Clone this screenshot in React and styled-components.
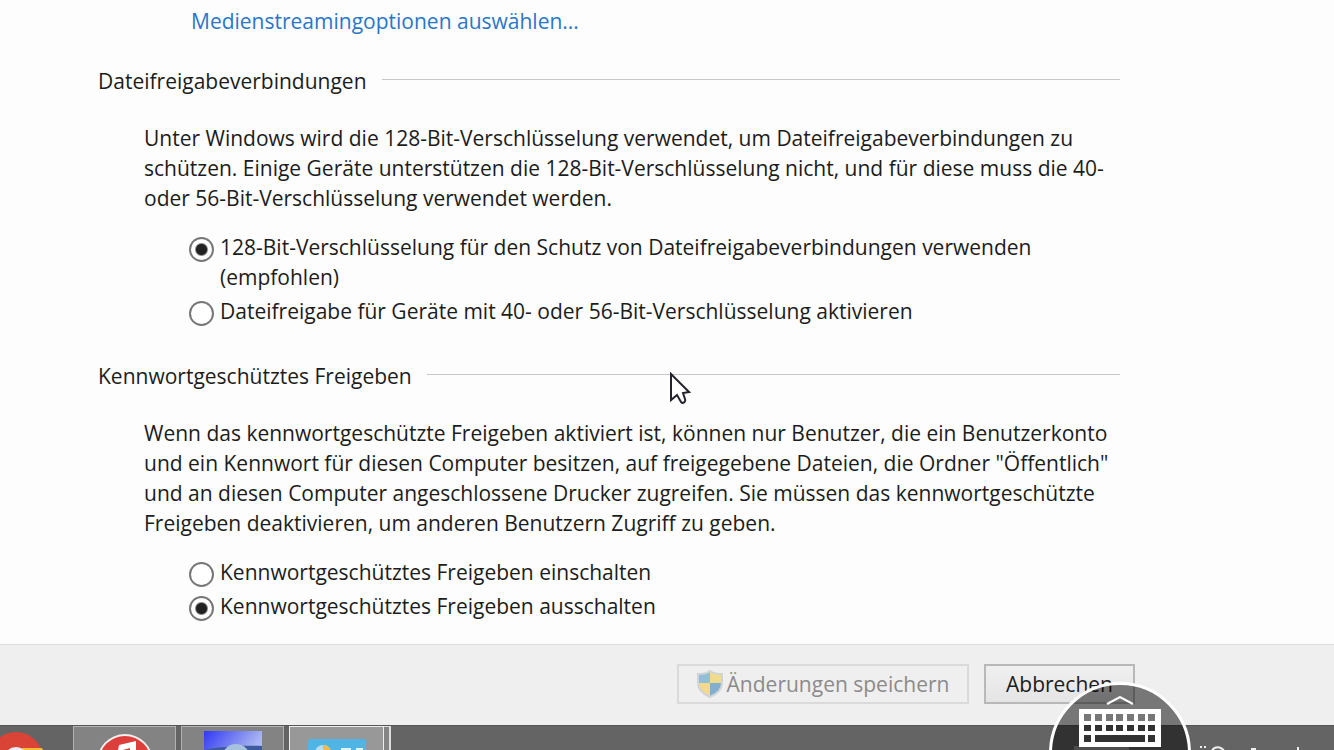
import React, { useState } from "react";
import styled, { createGlobalStyle } from "styled-components";

const sections = [
  {
    id: "encryption",
    title: "Dateifreigabeverbindungen",
    text: [
      "Unter Windows wird die 128-Bit-Verschlüsselung verwendet, um Dateifreigabeverbindungen zu",
      "schützen. Einige Geräte unterstützen die 128-Bit-Verschlüsselung nicht, und für diese muss die 40-",
      "oder 56-Bit-Verschlüsselung verwendet werden.",
    ],
    options: [
      [
        "128-Bit-Verschlüsselung für den Schutz von Dateifreigabeverbindungen verwenden",
        "(empfohlen)",
      ],
      ["Dateifreigabe für Geräte mit 40- oder 56-Bit-Verschlüsselung aktivieren"],
    ],
    selected: 0,
  },
  {
    id: "password",
    title: "Kennwortgeschütztes Freigeben",
    text: [
      "Wenn das kennwortgeschützte Freigeben aktiviert ist, können nur Benutzer, die ein Benutzerkonto",
      "und ein Kennwort für diesen Computer besitzen, auf freigegebene Dateien, die Ordner \"Öffentlich\"",
      "und an diesen Computer angeschlossene Drucker zugreifen. Sie müssen das kennwortgeschützte",
      "Freigeben deaktivieren, um anderen Benutzern Zugriff zu geben.",
    ],
    options: [
      ["Kennwortgeschütztes Freigeben einschalten"],
      ["Kennwortgeschütztes Freigeben ausschalten"],
    ],
    selected: 1,
  },
];

const Lines = ({ lines }) =>
  lines.map((line, index) => (
    <React.Fragment key={index}>
      {index > 0 && <br />}
      {line}
    </React.Fragment>
  ));

const Section = ({ section }) => {
  const [selected, setSelected] = useState(section.selected);

  return (
    <section>
      <Styled_Heading>{section.title}</Styled_Heading>
      <Styled_Text>
        <Lines lines={section.text} />
      </Styled_Text>
      <Styled_Options role="radiogroup" aria-label={section.title}>
        {section.options.map((option, index) => (
          <Styled_Option key={index} htmlFor={`${section.id}-${index}`}>
            <Styled_Radio
              type="radio"
              id={`${section.id}-${index}`}
              name={section.id}
              checked={selected === index}
              onChange={() => setSelected(index)}
            />
            <span>
              <Lines lines={option} />
            </span>
          </Styled_Option>
        ))}
      </Styled_Options>
    </section>
  );
};

const ShieldIcon = () => (
  <svg width="26" height="28" viewBox="0 0 26 28" aria-hidden="true">
    <g opacity="0.6">
      <path d="M13 1C9 4 5 4 1 4v9h12z" fill="#5b9ccc" />
      <path d="M13 1c4 3 8 3 12 3v9H13z" fill="#f2cd4c" />
      <path d="M1 13c0 7 5 11 12 14V13z" fill="#f2cd4c" />
      <path d="M25 13c0 7-5 11-12 14V13z" fill="#3d84bc" />
      <path
        d="M13 1c4 3 8 3 12 3v9c0 7-5 11-12 14C6 24 1 20 1 13V4c4 0 8 0 12-3z"
        fill="none"
        stroke="#b9c3c9"
        strokeWidth="2"
      />
    </g>
  </svg>
);

const BrowserIcon = () => (
  <svg width="64" height="26" viewBox="0 0 64 26" aria-hidden="true">
    <circle cx="16" cy="33" r="27" fill="#d94436" />
    <path d="M22 22h20c2 4 2 8 2 12H22z" fill="#f5bd35" />
    <circle cx="16" cy="33" r="12" fill="#e9edf5" />
  </svg>
);

const MusicIcon = () => (
  <svg width="56" height="26" viewBox="0 0 56 26" aria-hidden="true">
    <circle cx="28" cy="35" r="28" fill="#f7eeee" />
    <circle cx="28" cy="35" r="26" fill="#dc3f3b" />
    <path d="M22 18l17-4v14h-6v-7l-7 2v5h-6z" fill="#fff" />
  </svg>
);

const DesktopIcon = () => (
  <svg width="58" height="26" viewBox="0 0 58 26" aria-hidden="true">
    <defs>
      <linearGradient id="desktop-sky" x2="1" y2="0.3">
        <stop offset="0" stopColor="#3038f4" />
        <stop offset="1" stopColor="#aab7ef" />
      </linearGradient>
    </defs>
    <path d="M0 4h58v22H0z" fill="url(#desktop-sky)" />
    <path d="M0 26v-3c12-3 38-5 58-4v7z" fill="#3e5b9d" />
    <circle cx="32" cy="31" r="14" fill="#a7c2df" />
  </svg>
);

const ControlPanelIcon = () => (
  <svg width="60" height="26" viewBox="0 0 60 26" aria-hidden="true">
    <rect x="1" y="12" width="58" height="22" rx="2" fill="#50b4e5" />
    <circle cx="16" cy="26" r="8" fill="#b9dcef" />
    <path d="M16 26v-8a8 8 0 0 1 8 8z" fill="#f3b94c" />
    <path d="M34 22h10M49 22h7" stroke="#e0f4fc" strokeWidth="2" />
  </svg>
);

const KeyboardIcon = () => (
  <svg width="82" height="54" viewBox="0 0 82 54" aria-hidden="true">
    <path d="M28 8L41 1l13 7" fill="none" stroke="#fff" strokeWidth="2" />
    <path
      fill="#fff"
      fillRule="evenodd"
      d="M0 13h82v38H0z M5 18v7h7v-7z M16 18v7h7v-7z M27 18v7h7v-7z M37 18v7h7v-7z M48 18v7h7v-7z M59 18v7h7v-7z M69 18v7h7v-7z M5 29v6h7v-6z M16 29v6h7v-6z M27 29v6h7v-6z M37 29v6h7v-6z M48 29v6h7v-6z M59 29v6h7v-6z M69 29v6h7v-6z M5 39v7h7v-7z M16 39v7h50v-7z M69 39v7h7v-7z"
    />
  </svg>
);

const TrayIcons = () => (
  <svg width="236" height="7" viewBox="0 0 236 7" aria-hidden="true">
    <path d="M0 3h55v4H0z" fill="#9a9a9a" />
    <g fill="none" stroke="#eee" strokeWidth="2">
      <path d="M127 3v2M131 3v2M138 8c2-5 9-5 12 0M177 6h5M224 4v3" />
    </g>
  </svg>
);

const Cursor = () => (
  <Styled_Cursor width="22" height="34" viewBox="0 0 22 34" aria-hidden="true">
    <path
      d="M2 2v26l6-5 4 7c2 2 5 0 4-3l-2-6 6-1z"
      fill="#fff"
      stroke="#25232d"
      strokeWidth="2"
    />
  </Styled_Cursor>
);

const App = () => (
  <Styled_Window>
    <GlobalStyle />
    <Styled_Content>
      <Styled_Link href="#streaming">Medienstreamingoptionen auswählen...</Styled_Link>
      <Styled_Sections>
        {sections.map((section) => (
          <Section key={section.id} section={section} />
        ))}
      </Styled_Sections>
    </Styled_Content>
    <Styled_Footer>
      <Styled_Button disabled $width={292}>
        <ShieldIcon />
        Änderungen speichern
      </Styled_Button>
      <Styled_Button $width={151}>Abbrechen</Styled_Button>
    </Styled_Footer>
    <Styled_Taskbar>
      <Styled_PinnedTask aria-label="Browser">
        <BrowserIcon />
      </Styled_PinnedTask>
      <Styled_Task aria-label="Musik">
        <MusicIcon />
      </Styled_Task>
      <Styled_Task aria-label="Desktop">
        <DesktopIcon />
      </Styled_Task>
      <Styled_TaskGroup>
        <Styled_Task aria-label="Systemsteuerung" $active>
          <ControlPanelIcon />
        </Styled_Task>
        <Styled_TaskStack />
      </Styled_TaskGroup>
      <Styled_Tray>
        <TrayIcons />
      </Styled_Tray>
    </Styled_Taskbar>
    <Styled_KeyboardButton aria-label="Tastatur">
      <KeyboardIcon />
    </Styled_KeyboardButton>
    <Cursor />
  </Styled_Window>
);

const GlobalStyle = createGlobalStyle`
  * {
    box-sizing: border-box;
  }

  body {
    margin: 0;
    background: #fdfdfd;
    color: #1c1c1c;
    font-family: "Open Sans", "Noto Sans", sans-serif;
    font-size: 21px;
    line-height: 30px;
  }
`;

const Styled_Window = styled.div`
  position: relative;
  height: 100vh;
  overflow: hidden;
  display: flex;
  flex-direction: column;
`;

const Styled_Content = styled.main`
  flex: 1;
  padding: 6px 214px 0 98px;
  white-space: nowrap;
`;

const Styled_Link = styled.a`
  display: inline-block;
  margin-left: 93px;
  color: #2a76c8;
  text-decoration: none;
`;

const Styled_Sections = styled.div`
  display: flex;
  flex-direction: column;
  gap: 35px;
  margin-top: 30px;
`;

const Styled_Heading = styled.h2`
  display: flex;
  align-items: center;
  gap: 15px;
  margin: 0;
  font-size: 21px;
  font-weight: 400;

  &::after {
    content: "";
    flex: 1;
    height: 1px;
    margin-bottom: 4px;
    background: #c8c8c8;
  }
`;

const Styled_Text = styled.p`
  margin: 27px 0 19px 46px;
`;

const Styled_Options = styled.div`
  display: flex;
  flex-direction: column;
  gap: 4px;
  margin-left: 91px;
`;

const Styled_Option = styled.label`
  display: flex;
  align-items: flex-start;
  gap: 6px;
`;

const Styled_Radio = styled.input`
  appearance: none;
  flex: none;
  width: 25px;
  height: 25px;
  margin: 5px 0 0;
  border: 2px solid #777;
  border-radius: 50%;
  background: #fff;

  &:checked {
    background: radial-gradient(circle, #222 5px, #fff 7px);
  }
`;

const Styled_Footer = styled.footer`
  height: 81px;
  padding: 19px 199px 0 0;
  display: flex;
  justify-content: flex-end;
  align-items: flex-start;
  gap: 15px;
  border-top: 1px solid #dcdcdc;
  background: #efefef;
`;

const Styled_Button = styled.button`
  width: ${({ $width }) => $width}px;
  height: 40px;
  padding: 0;
  display: flex;
  align-items: center;
  justify-content: center;
  gap: 4px;
  border: 2px solid #b8b8b8;
  background: linear-gradient(#f0f0f0, #e4e4e4);
  color: #1c1c1c;
  font: inherit;
  white-space: nowrap;

  &:disabled {
    border-color: #dadada;
    background: #efefef;
    color: #8b8b8b;
  }
`;

const Styled_Taskbar = styled.nav`
  height: 25px;
  display: flex;
  gap: 5px;
  overflow: hidden;
  border-top: 1px solid #565656;
  background: #646464;
`;

const Styled_Task = styled.button`
  width: ${({ $active }) => ($active ? 95 : 103)}px;
  height: 60px;
  padding: 0;
  display: flex;
  justify-content: center;
  border: 1px solid ${({ $active }) => ($active ? "#eee" : "#b2b2b2")};
  background: ${({ $active }) => ($active ? "#989898" : "#838383")};
`;

const Styled_PinnedTask = styled.button`
  width: 68px;
  height: 60px;
  padding: 0;
  display: flex;
  border: none;
  background: none;
`;

const Styled_TaskGroup = styled.div`
  display: flex;
`;

const Styled_TaskStack = styled.div`
  width: 7px;
  height: 60px;
  border: solid #dedede;
  border-width: 1px 2px 0 0;
  background: #858585;
`;

const Styled_Tray = styled.div`
  margin: 17px 24px 0 auto;
  display: flex;
`;

const Styled_KeyboardButton = styled.button`
  position: absolute;
  right: 143px;
  bottom: -74px;
  width: 142px;
  height: 142px;
  padding: 11px 0 0;
  display: flex;
  justify-content: center;
  align-items: flex-start;
  border: 3px solid #fff;
  border-radius: 50%;
  background: rgba(0, 0, 0, 0.5);
`;

const Styled_Cursor = styled.svg`
  position: absolute;
  left: 669px;
  top: 372px;
`;

export default App;
